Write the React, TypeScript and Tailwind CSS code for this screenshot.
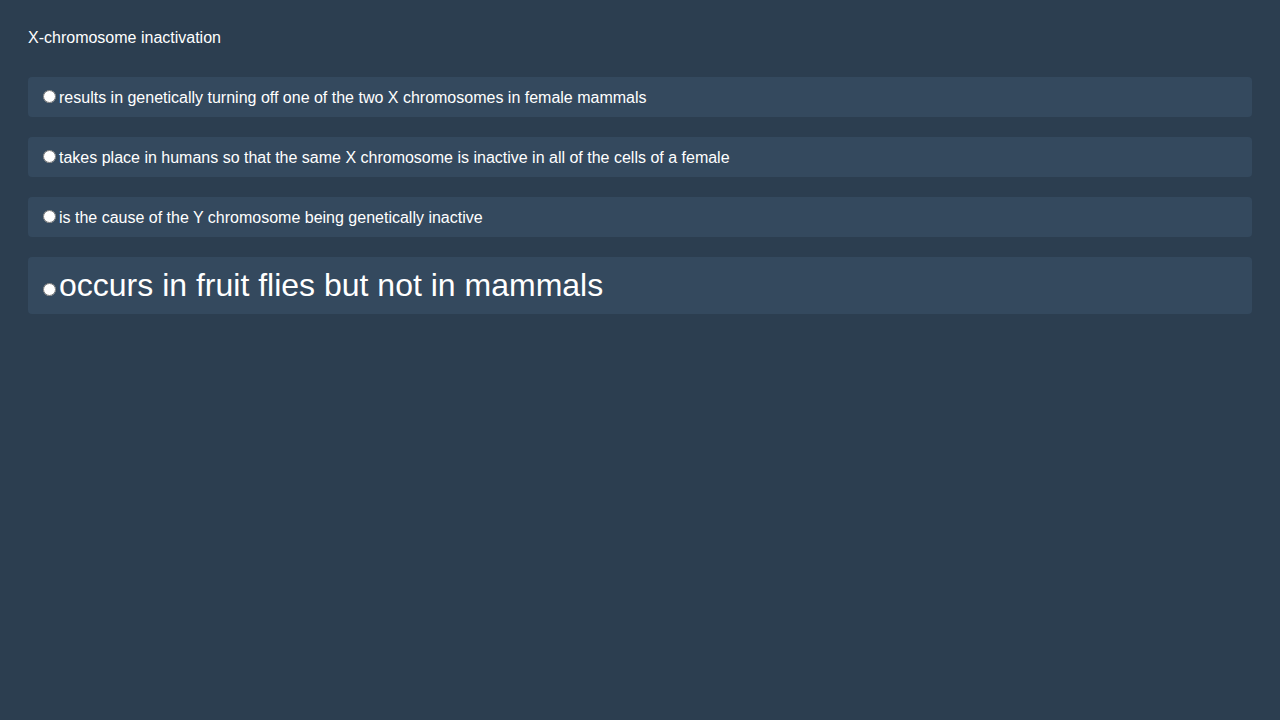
import React from 'react';

const options = [
  { text: 'results in genetically turning off one of the two X chromosomes in female mammals', big: false },
  { text: 'takes place in humans so that the same X chromosome is inactive in all of the cells of a female', big: false },
  { text: 'is the cause of the Y chromosome being genetically inactive', big: false },
  { text: 'occurs in fruit flies but not in mammals', big: true },
];

export default function App() {
  return (
    <div className="min-h-screen bg-[#2c3e50] px-[28px] pt-[29px] pb-[28px] text-[16px] text-white font-['Liberation_Sans',Arial,sans-serif] leading-[normal]">
      <div className="mb-[30px]">X-chromosome inactivation</div>
      {options.map((o, i) => (
        <label
          key={i}
          className={`mb-5 block rounded bg-[#34495e] p-[10px] ${o.big ? 'text-[32px]' : 'text-[16px]'}`}
        >
          <input type="radio" name="q" className="mt-[3px] mr-[3px] ml-[5px]" />
          {o.text}
        </label>
      ))}
    </div>
  );
}
